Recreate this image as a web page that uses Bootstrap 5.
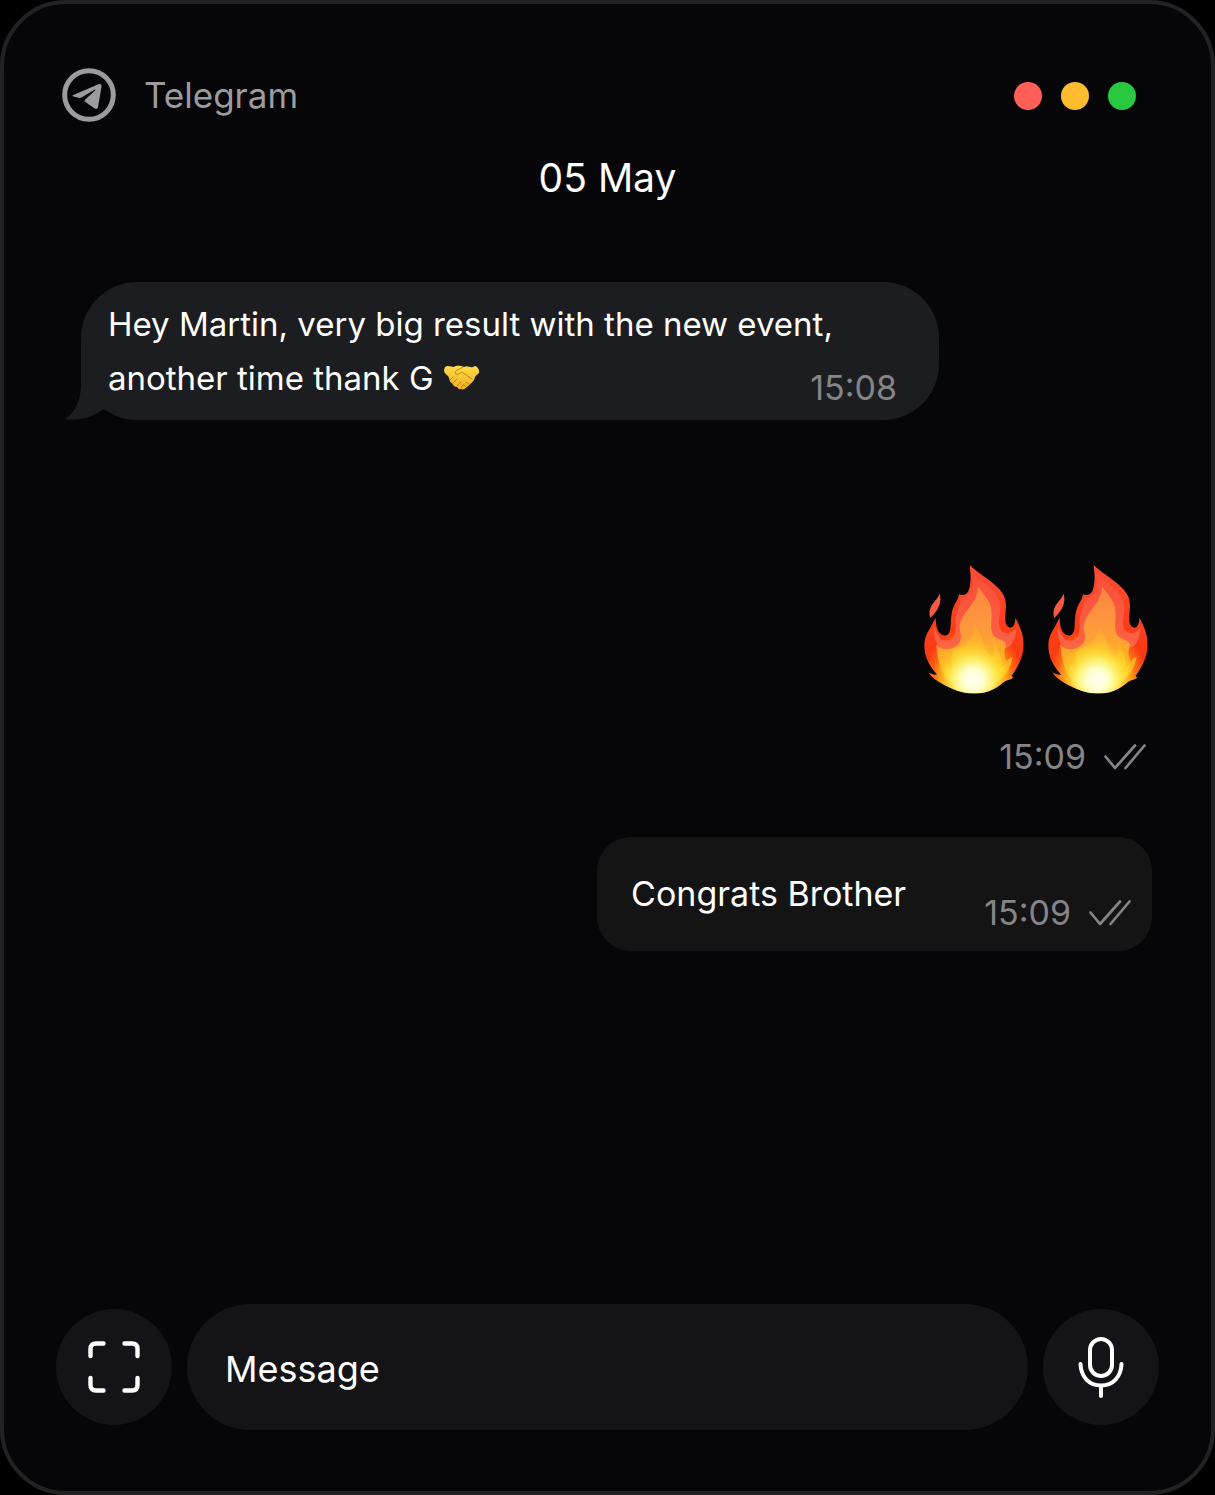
<!DOCTYPE html>
<html lang="en">
<head>
<meta charset="utf-8">
<meta name="viewport" content="width=device-width, initial-scale=1">
<title>Telegram</title>
<link href="https://cdn.jsdelivr.net/npm/bootstrap@5.3.0/dist/css/bootstrap.min.css" rel="stylesheet">
<style>
  body { background: #000; color: #fff; font-family: Inter, "Liberation Sans", sans-serif; }
  .chat-window { background: #060608; border: 4px solid #222224; border-radius: 66px; padding: 64px 52px 61px; }
  .chat-header { padding: 0 23px 0 6px; }
  .app-name { font-size: 35px; line-height: 48px; color: #9c9c9e; }
  .window-dots { gap: 19px; padding-top: 2px; }
  .window-dot { width: 28px; height: 28px; }
  .dot-close { background: #ff5f57; }
  .dot-minimise { background: #febc2e; }
  .dot-zoom { background: #28c840; }
  .chat-date { font-size: 39px; line-height: 48px; margin: 32px 0 80px; font-weight: 400; }
  .bubble-in, .bubble-out { font-size: 34px; line-height: 54px; }
  .bubble-in { background: #1c1d20; border-radius: 56px; margin-left: 25px; max-width: 858px; padding: 15px 42px 15px 27px; font-size: 33px; }
  .bubble-tail { left: -16px; bottom: 0; }
  .handshake { margin-left: 10px; }
  .stamp { font-size: 34px; line-height: 34px; color: #858587; }
  .stamp-row { gap: 18px; }
  .sent-emoji { gap: 24px; margin-top: 145px; padding-right: 11px; }
  .sent-emoji + .stamp-row { margin: 46px 13px 63px 0; }
  .bubble-out { background: #141415; border-radius: 34px; margin-right: 7px; padding: 30px 21px 21px 34px; gap: 78px; }
  .bubble-out p { padding-bottom: 9px; }
  .composer { gap: 15px; }
  .round-btn { width: 116px; height: 116px; background: #141416; color: #fff; border: 0; }
  .message-box, .message-box:focus { background: #141416; color: #fff; height: 126px; border: 0; border-radius: 63px; padding: 4px 38px 0; font-size: 36px; }
  .message-box::placeholder { color: #fff; opacity: 1; }
</style>
<script src="https://cdn.jsdelivr.net/npm/bootstrap@5.3.0/dist/js/bootstrap.bundle.min.js" defer></script>
</head>
<body>
<svg width="0" height="0" class="position-absolute" aria-hidden="true">
  <defs>
    <radialGradient id="flameBody" gradientUnits="userSpaceOnUse" cx="190" cy="360" r="290">
      <stop offset="0" stop-color="#ffdf20"/><stop offset=".34" stop-color="#ff8a17"/><stop offset=".5" stop-color="#fb3a13"/><stop offset="1" stop-color="#fb4a30"/>
    </radialGradient>
    <linearGradient id="flameCoral" gradientUnits="userSpaceOnUse" x1="0" y1="50" x2="0" y2="400">
      <stop offset="0" stop-color="#fb4d37"/><stop offset=".6" stop-color="#fa6245"/><stop offset="1" stop-color="#ff9c20"/>
    </linearGradient>
    <linearGradient id="flameOrange" gradientUnits="userSpaceOnUse" x1="0" y1="90" x2="0" y2="410">
      <stop offset="0" stop-color="#fc8544"/><stop offset=".42" stop-color="#fe9a3b"/><stop offset=".75" stop-color="#ffb31f"/><stop offset="1" stop-color="#ffda20"/>
    </linearGradient>
    <linearGradient id="flameInner" gradientUnits="userSpaceOnUse" x1="0" y1="205" x2="0" y2="400">
      <stop offset="0" stop-color="#ffb236" stop-opacity=".2"/><stop offset=".4" stop-color="#ffc52c" stop-opacity=".7"/><stop offset="1" stop-color="#ffdc20"/>
    </linearGradient>
    <radialGradient id="flameGlow" gradientUnits="userSpaceOnUse" cx="188" cy="372" r="120">
      <stop offset="0" stop-color="#fffff4"/><stop offset=".28" stop-color="#ffffcc"/><stop offset=".5" stop-color="#fff67a" stop-opacity=".85"/><stop offset=".75" stop-color="#ffe434" stop-opacity=".4"/><stop offset="1" stop-color="#ffc820" stop-opacity="0"/>
    </radialGradient>
    <clipPath id="flameClip"><path d="M178 30C207 60 267 87 283 128C292 158 278 187 287 207C296 223 314 220 314 188C325 205 339 235 339 268C338 304 321 336 303 360C304 362 307 364 308 366C301 372 290 373 282 377C252 404 222 413 190 413C145 412 111 393 80 374C70 367 60 359 56 350C65 355 73 357 81 357C59 330 42 306 43 265C45 232 65 216 76 186C78 207 80 237 103 240C127 239 119 207 124 177C128 146 145 136 146 117C158 122 169 118 174 108C183 88 182 59 178 30Z"/></clipPath>
    <linearGradient id="handSkin" x1="0" y1="0" x2="0" y2="1"><stop offset="0" stop-color="#ffdb48"/><stop offset="1" stop-color="#f3b01d"/></linearGradient>
    <symbol id="flame" viewBox="42 30 298 384">
      <g clip-path="url(#flameClip)">
        <path fill="url(#flameBody)" d="M40 25H345V415H40Z"/>
        <path fill="url(#flameCoral)" d="M180 43C204 78 250 92 266 137C276 168 259 194 268 218C281 243 312 234 319 209C316 249 305 278 279 278L270 350L108 345L91 278C75 260 68 235 72 213C84 248 94 256 113 255C151 245 128 202 140 173C146 154 153 140 151 128C174 130 190 107 189 79Z"/>
        <path fill="url(#flameOrange)" d="M203 94C216 115 235 129 241 156C248 187 236 216 247 236C255 254 280 248 287 267C282 280 278 304 290 318C292 311 299 306 306 303C300 345 264 397 190 413C112 407 84 342 79 266C87 279 101 283 119 280C149 273 158 253 149 224C143 199 165 173 181 151C195 132 203 115 203 94Z"/>
        <path fill="url(#flameInner)" d="M193 205C200 233 222 244 222 280L245 307C256 285 251 267 247 254C265 283 276 306 273 333L289 324C275 373 242 401 190 409C135 403 109 365 106 325L127 342C122 310 123 280 137 280C166 276 190 249 193 205Z"/>
        <circle fill="url(#flameGlow)" cx="188" cy="372" r="120"/>
      </g>
      <path fill="#f85942" d="M88 115C94 132 90 148 82 162C76 173 68 180 61 188C56 176 58 164 64 152C72 138 84 130 88 115Z"/>
    </symbol>
    <symbol id="ticks" viewBox="0 0 42 26">
      <path fill="none" stroke="currentColor" stroke-width="2.700" stroke-linecap="round" stroke-linejoin="round" d="M1.500 12.500L11 24L31 1.500M21.500 24L40.500 1.500"/>
    </symbol>
  </defs>
</svg>

<main class="chat-window d-flex flex-column min-vh-100">
  <header class="chat-header d-flex align-items-center justify-content-between">
    <div class="d-flex align-items-center">
      <svg width="54" height="54" viewBox="0 0 54 54" aria-hidden="true">
        <circle cx="27" cy="27" r="24.300" fill="none" stroke="#9c9c9e" stroke-width="5"/>
        <path fill="#9c9c9e" d="M11.200 27.100L36.500 16.200C38.600 15.400 39.900 16.700 39.500 18.700L36.200 38.200C35.900 41.100 34.200 41.500 31.900 39.900L23.400 34C22.300 33.100 22.400 32.400 23.300 31.500L33.100 22.600C33.900 21.700 33.200 21.200 32.200 21.900L19.400 29.500C18.500 30 17.700 30.100 16.700 29.800L11.400 28.500C10.300 28.200 10.200 27.500 11.200 27.100Z"/>
      </svg>
      <span class="app-name ms-4 ps-1">Telegram</span>
    </div>
    <div class="window-dots d-flex">
      <span class="window-dot dot-close rounded-circle"></span>
      <span class="window-dot dot-minimise rounded-circle"></span>
      <span class="window-dot dot-zoom rounded-circle"></span>
    </div>
  </header>

  <h1 class="chat-date text-center">05 May</h1>

  <article class="bubble-in position-relative">
    <svg class="bubble-tail position-absolute" width="56" height="56" viewBox="0 0 56 56" aria-hidden="true">
      <path fill="#1c1d20" d="M16 0V20C16 36 10 49 0 55C12 57 27 54 37 46L56 40V0Z"/>
    </svg>
    <div class="position-relative">Hey Martin, very big result with the new event,</div>
    <div class="position-relative d-flex justify-content-between">
      <div class="d-flex align-items-center">another time thank G
        <svg class="handshake" width="36" height="26" viewBox="0 0 36 26" role="img" aria-label="handshake">
          <path fill="url(#handSkin)" d="M1 2C4 0 7 2 10 2C13 0 17 1 20 2C23 0 26 3 29 2L31 1C33 1 36 5 35 8C34 9 32 10 31 12C30 17 26 19 23 22C21 24 19 25 17 24C15 25 14 23 13 22C10 22 9 20 8 18C5 17 6 14 4 11C2 9 0 8 0 5Z"/>
          <path fill="none" stroke="#a66a08" stroke-opacity=".7" stroke-width="1" stroke-linecap="round" stroke-linejoin="round" d="M19 2L12 6C10 8 12 10 15 9L18 7L28 14M6 15L9 12M9 18L13 14M13 21L17 17M17 23L20 19M22 17L25 19M20 20L22 22"/>
        </svg>
      </div>
      <time class="stamp align-self-end">15:08</time>
    </div>
  </article>

  <div class="sent-emoji d-flex justify-content-end" role="img" aria-label="fire fire">
    <svg width="100" height="129"><use href="#flame"/></svg>
    <svg width="100" height="129"><use href="#flame"/></svg>
  </div>
  <div class="stamp-row d-flex align-items-center justify-content-end">
    <time class="stamp">15:09</time>
    <svg class="stamp" width="42" height="26"><use href="#ticks"/></svg>
  </div>

  <article class="bubble-out d-flex align-items-end align-self-end">
    <p class="mb-0">Congrats Brother</p>
    <div class="stamp-row d-flex align-items-center">
      <time class="stamp">15:09</time>
      <svg class="stamp" width="42" height="26"><use href="#ticks"/></svg>
    </div>
  </article>

  <form class="composer d-flex align-items-center mt-auto">
    <button type="button" class="round-btn btn rounded-circle p-0 flex-shrink-0" aria-label="Scan">
      <svg width="52" height="52" viewBox="0 0 52 52" fill="none" stroke="currentColor" stroke-width="4.400" stroke-linecap="round"><path d="M2.500 15V8Q2.500 2.500 8 2.500H15.500M36.500 2.500H44Q49.500 2.500 49.500 8V15M49.500 37V44Q49.500 49.500 44 49.500H36.500M15.500 49.500H8Q2.500 49.500 2.500 44V37"/></svg>
    </button>
    <input type="text" class="message-box form-control shadow-none" placeholder="Message" aria-label="Message">
    <button type="button" class="round-btn btn rounded-circle p-0 flex-shrink-0" aria-label="Record voice message">
      <svg width="46" height="62" viewBox="0 0 46 62" fill="none" stroke="currentColor" stroke-width="4" stroke-linecap="round"><rect x="12" y="3" width="22" height="37" rx="11"/><path d="M2.500 28C3 41 11 49.500 23 49.500S43 41 43.500 28M23 50V60"/></svg>
    </button>
  </form>
</main>
</body>
</html>
